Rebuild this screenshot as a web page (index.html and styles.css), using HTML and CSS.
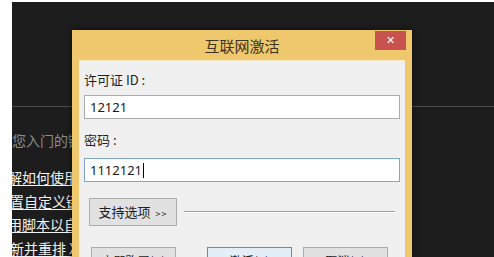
FILE: index.html
```html
<!DOCTYPE html>
<html lang="zh-CN">
<head>
<meta charset="utf-8">
<title>互联网激活</title>
<link rel="stylesheet" href="styles.css">
</head>
<body>
<div class="screen">
  <div class="panel">
    <div class="rule"></div>
    <div class="intro">帮助您入门的链接</div>
    <ul class="links">
      <li><a class="cut" href="#">了解如何使用新功能</a></li>
      <li><a class="cut2" href="#">设置自定义键盘快捷键</a></li>
      <li><a class="cut" href="#">使用脚本以自动执行任务</a></li>
      <li><a class="cut2" href="#">刷新并重排 XML 文档</a></li>
    </ul>
  </div>

  <div class="dialog">
    <div class="titlebar">
      <span></span>
      <span class="title">互联网激活</span>
      <span class="close">✕</span>
    </div>
    <div class="content">
      <div class="label">许可证 ID :</div>
      <div class="input">12121</div>
      <div class="label label2">密码 :</div>
      <div class="input focus">1112121<span class="caret"></span></div>
      <div class="options">
        <div class="btn opt">支持选项 <span class="arrows">&gt;&gt;</span></div>
        <div class="etched"></div>
      </div>
      <div class="actions">
        <div class="btn act">立即购买(B)</div>
        <div class="btn act default">激活(A)</div>
        <div class="btn act">取消(C)</div>
      </div>
    </div>
  </div>
</div>
</body>
</html>
```

FILE: styles.css
```css
* { box-sizing: border-box; }
html, body { margin: 0; padding: 0; }
body {
  background: #ffffff;
  width: 494px;
  height: 257px;
  overflow: hidden;
  font-family: "Noto Sans CJK SC", "Noto Sans", sans-serif;
}
.screen {
  position: relative;
  margin: 2px 0 0 12px;
  width: 482px;
  height: 255px;
  background: #1d1d1d;
  overflow: hidden;
}
.panel {
  width: 100%;
}
.rule {
  margin-top: 104px;
  height: 1px;
  background: #4e4e4e;
}
.intro {
  margin-top: 23px;
  width: 60px;
  overflow: hidden;
  white-space: nowrap;
  font-size: 14px;
  line-height: 20px;
  color: #8c8c8c;
  text-indent: -28px;
}
.links {
  list-style: none;
  margin: 16px 0 0 0;
  padding: 0;
  width: 60px;
  overflow: hidden;
}
.links li {
  height: 23.5px;
  line-height: 23px;
  white-space: nowrap;
  font-size: 14px;
}
.links a {
  color: #f2f2f2;
  text-decoration: underline;
  text-underline-offset: 2px;
  display: inline-block;
}
.links a.cut { margin-left: -18px; }
.links a.cut2 { margin-left: -16px; }

.dialog {
  position: absolute;
  left: 60px;
  top: 28px;
  width: 340px;
  height: 240px;
  background: #efc76c;
  padding: 0 7px 0 7px;
  box-shadow: 0 0 6px rgba(0, 0, 0, 0.6);
}
.titlebar {
  height: 30px;
  display: grid;
  grid-template-columns: 1fr auto 1fr;
  align-items: start;
}
.title {
  font-size: 15px;
  line-height: 30px;
  color: #3b3524;
  padding-top: 1px;
}
.close {
  justify-self: end;
  margin-top: 1px;
  margin-right: -1px;
  width: 31px;
  height: 19px;
  background: #c8524d;
  color: #ffffff;
  font-size: 11px;
  font-weight: bold;
  line-height: 19px;
  text-align: center;
  font-family: "DejaVu Sans", sans-serif;
}
.content {
  background: #f0f0f0;
  border-top: 1px solid #f6e9c6;
  height: 210px;
  padding: 0 5px 0 5px;
}
.label {
  margin-top: 11px;
  font-size: 13px;
  line-height: 16px;
  color: #1e1e1e;
}
.label2 { margin-top: 13px; }
.input {
  margin-top: 7px;
  height: 24px;
  background: #ffffff;
  border: 1px solid #acacac;
  font-family: "Noto Sans", sans-serif;
  font-size: 13px;
  line-height: 22px;
  padding-left: 5px;
  color: #1a1a1a;
  display: flex;
  align-items: center;
}
.input.focus {
  margin-top: 10px;
  border-color: #7ea6c6;
}
.caret {
  display: inline-block;
  width: 1px;
  height: 15px;
  background: #000;
  margin-left: 1px;
}
.options {
  margin-top: 16px;
  display: flex;
  align-items: center;
  padding-left: 5px;
  padding-right: 5px;
}
.btn {
  background: #e1e1e1;
  border: 1px solid #adadad;
  color: #1e1e1e;
  text-align: center;
  white-space: nowrap;
}
.opt {
  width: 88px;
  height: 28px;
  font-size: 13px;
  line-height: 26px;
}
.arrows {
  font-size: 9px;
  letter-spacing: 1px;
  margin-left: 2px;
}
.etched {
  flex: 1;
  margin-left: 7px;
  height: 2px;
  border-top: 1px solid #a0a0a0;
  border-bottom: 1px solid #ffffff;
}
.actions {
  margin-top: 21px;
  display: flex;
  padding-left: 7px;
}
.act {
  width: 85px;
  height: 26px;
  font-size: 12px;
  line-height: 18px;
  padding-top: 4px;
}
.act.default {
  margin-left: 31px;
  border-color: #5b8fbf;
  background: #e4eef6;
}
.act.default + .act {
  margin-left: 11px;
}
```
